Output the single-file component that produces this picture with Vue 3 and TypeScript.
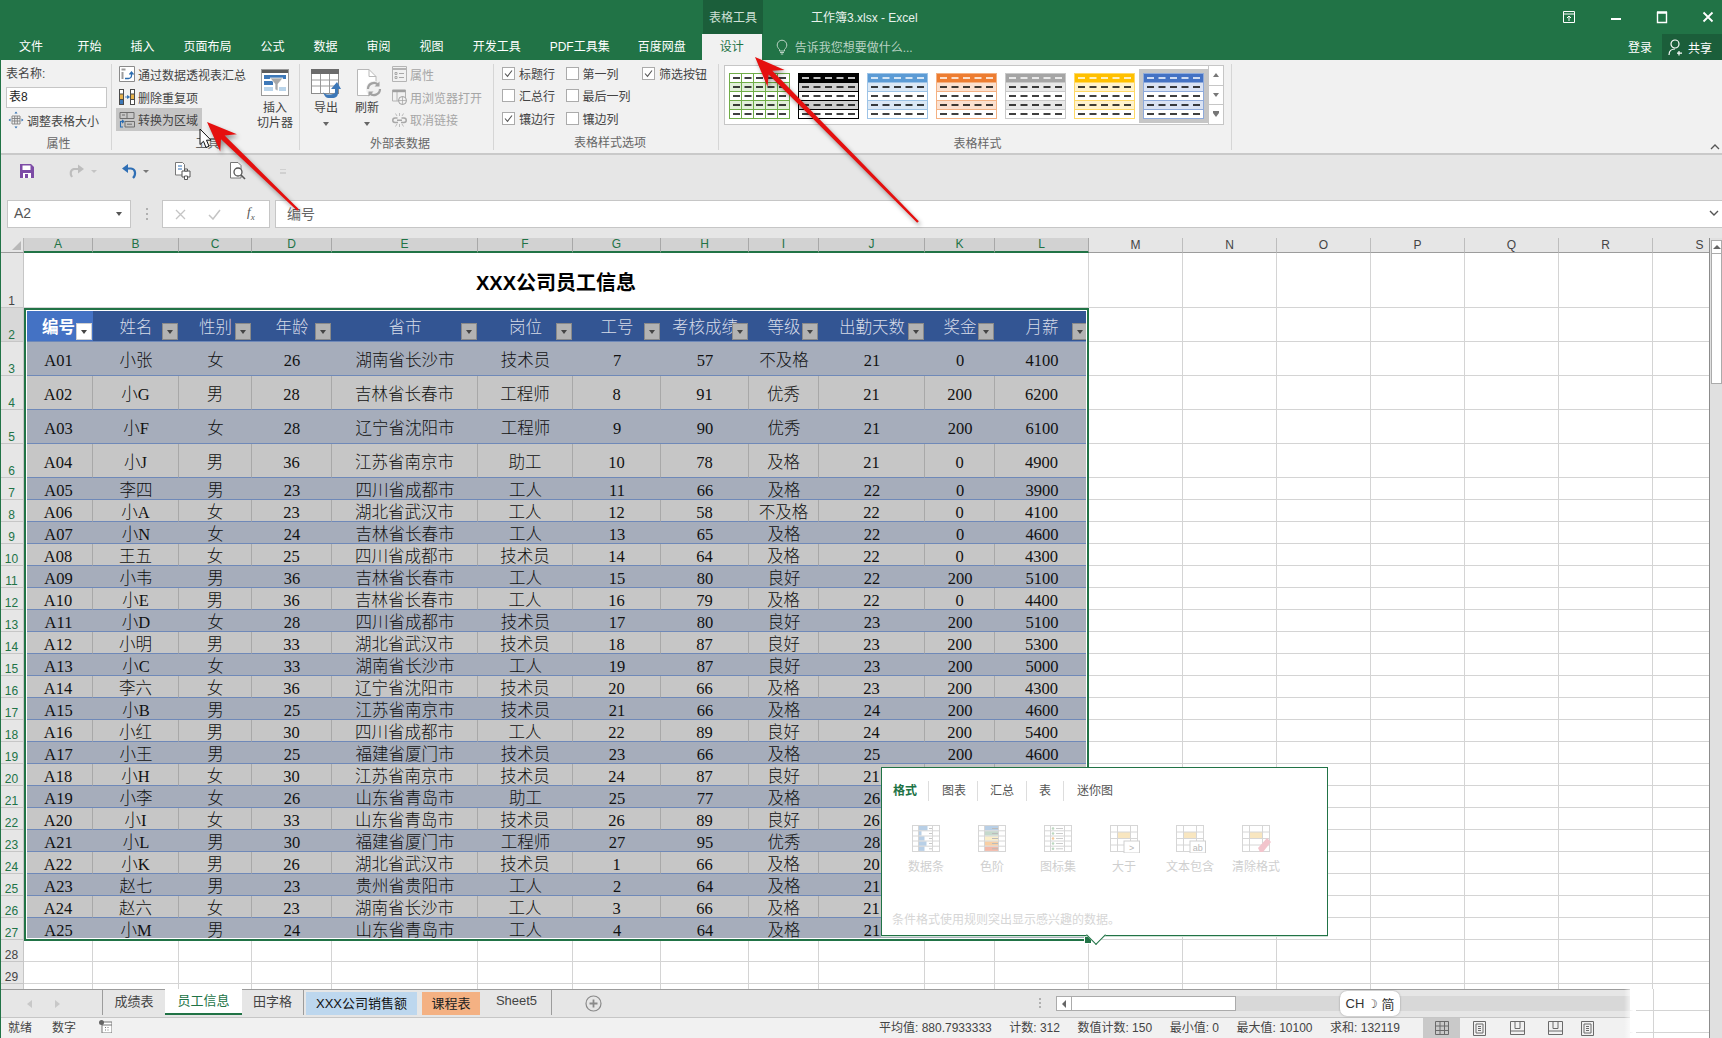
<script setup lang="ts">
const menu = ['文件', '开始', '插入', '页面布局', '公式', '数据', '审阅', '视图', '开发工具', 'PDF工具集', '百度网盘']
const colLetters = ['A', 'B', 'C', 'D', 'E', 'F', 'G', 'H', 'I', 'J', 'K', 'L']
const moreLetters = ['M', 'N', 'O', 'P', 'Q', 'R', 'S']
const heads = ['编号', '姓名', '性别', '年龄', '省市', '岗位', '工号', '考核成绩', '等级', '出勤天数', '奖金', '月薪']
const raw = [
  'A01 小张 女 26 湖南省长沙市 技术员 7 57 不及格 21 0 4100',
  'A02 小G 男 28 吉林省长春市 工程师 8 91 优秀 21 200 6200',
  'A03 小F 女 28 辽宁省沈阳市 工程师 9 90 优秀 21 200 6100',
  'A04 小J 男 36 江苏省南京市 助工 10 78 及格 21 0 4900',
  'A05 李四 男 23 四川省成都市 工人 11 66 及格 22 0 3900',
  'A06 小A 女 23 湖北省武汉市 工人 12 58 不及格 22 0 4100',
  'A07 小N 女 24 吉林省长春市 工人 13 65 及格 22 0 4600',
  'A08 王五 女 25 四川省成都市 技术员 14 64 及格 22 0 4300',
  'A09 小韦 男 36 吉林省长春市 工人 15 80 良好 22 200 5100',
  'A10 小E 男 36 吉林省长春市 工人 16 79 及格 22 0 4400',
  'A11 小D 女 28 四川省成都市 技术员 17 80 良好 23 200 5100',
  'A12 小明 男 33 湖北省武汉市 技术员 18 87 良好 23 200 5300',
  'A13 小C 女 33 湖南省长沙市 工人 19 87 良好 23 200 5000',
  'A14 李六 女 36 辽宁省沈阳市 技术员 20 66 及格 23 200 4300',
  'A15 小B 男 25 江苏省南京市 技术员 21 66 及格 24 200 4600',
  'A16 小红 男 30 四川省成都市 工人 22 89 良好 24 200 5400',
  'A17 小王 男 25 福建省厦门市 技术员 23 66 及格 25 200 4600',
  'A18 小H 女 30 江苏省南京市 技术员 24 87 良好 21',
  'A19 小李 女 26 山东省青岛市 助工 25 77 及格 26',
  'A20 小I 女 33 山东省青岛市 技术员 26 89 良好 26',
  'A21 小L 男 30 福建省厦门市 工程师 27 95 优秀 28',
  'A22 小K 男 26 湖北省武汉市 技术员 1 66 及格 20',
  'A23 赵七 男 23 贵州省贵阳市 工人 2 64 及格 21',
  'A24 赵六 女 23 湖南省长沙市 工人 3 66 及格 21',
  'A25 小M 男 24 山东省青岛市 工人 4 64 及格 21'
]
const dataRows = raw.map((line, i) => {
  const cells = line.split(' ')
  while (cells.length < 12) cells.push('')
  return { num: i + 3, cells, band: i % 2 === 0, tall: i < 4 }
})
const blankRows = ['28', '29', '']

const checks = [
  { t: '标题行', on: true }, { t: '第一列', on: false }, { t: '筛选按钮', on: true },
  { t: '汇总行', on: false }, { t: '最后一列', on: false }, { t: '', on: false, hide: true },
  { t: '镶边行', on: true }, { t: '镶边列', on: false }
]

const thumbs = [
  { head: '#ffffff', band: '#e2efda', line: '#70ad47', dash: '#000000', grid: true },
  { head: '#000000', band: '#cfcfcf', line: '#000000', dash: '#000000', hd: '#ffffff' },
  { head: '#5b9bd5', band: '#dbe8f5', line: '#9dc3e6', dash: '#000000', hd: '#ffffff' },
  { head: '#ed7d31', band: '#fbe0cf', line: '#f4b183', dash: '#000000', hd: '#ffffff' },
  { head: '#a5a5a5', band: '#e8e8e8', line: '#c9c9c9', dash: '#000000', hd: '#ffffff' },
  { head: '#ffc000', band: '#fff2cc', line: '#ffd966', dash: '#000000', hd: '#ffffff' },
  { head: '#4472c4', band: '#d9e2f3', line: '#8eaadb', dash: '#000000', hd: '#ffffff', active: true }
]

const popTabs = ['格式', '图表', '汇总', '表', '迷你图']
const popItems = [
  { k: 'bars', t: '数据条' }, { k: 'scale', t: '色阶' }, { k: 'icons', t: '图标集' },
  { k: 'gt', t: '大于' }, { k: 'ab', t: '文本包含' }, { k: 'clear', t: '清除格式' }
]
const scaleColors = ['#b8cfe6', '#c5d9cc', '#fbeec9', '#f8cfa4', '#f2b8a8']
const barWidths = [9, 3, 6, 8, 6]

const sheets = [
  { t: '成绩表', c: 'tab-a' }, { t: '员工信息', c: 'tab-on' }, { t: '田字格', c: 'tab-b' },
  { t: 'XXX公司销售额', c: 'tab-blue' }, { t: '课程表', c: 'tab-orange' }, { t: 'Sheet5', c: 'tab-c' }
]
const stats = ['平均值: 880.7933333', '计数: 312', '数值计数: 150', '最小值: 0', '最大值: 10100', '求和: 132119']

function arrow(x1: number, y1: number, x2: number, y2: number): string {
  const len = Math.hypot(x2 - x1, y2 - y1)
  const ux = (x2 - x1) / len
  const uy = (y2 - y1) / len
  const nx = -uy
  const ny = ux
  const at = (d: number, w: number) => `${x1 + ux * d + nx * w},${y1 + uy * d + ny * w}`
  return [
    at(0, -1.2), at(len - 22, -2.6), at(len - 30, -12), at(len, 0),
    at(len - 30, 12), at(len - 22, 2.6), at(0, 1.2)
  ].join(' ')
}
const arrows = [arrow(298, 210, 207, 122), arrow(918, 222, 755, 57)]
</script>

<template>
  <div class="app">
    <header class="titlebar">
      <div class="title-top">
        <div class="ctx-tab">表格工具</div>
        <div class="doc-title">工作簿3.xlsx - Excel</div>
        <div class="win-btns">
          <svg width="14" height="14" viewBox="0 0 14 14" class="win-opt"><path d="M1.5 1.5h11v11h-11zM1.5 4h11M7 11V6M5 8l2-2 2 2" fill="none" stroke="#fff" /></svg>
          <svg width="12" height="12" viewBox="0 0 12 12" class="win-min"><path d="M1 8h10" stroke="#fff" stroke-width="2" /></svg>
          <svg width="12" height="14" viewBox="0 0 12 14" class="win-max"><path d="M1.5 2.5h9v10h-9z" fill="none" stroke="#fff" stroke-width="1.4" /><path d="M1 2.5h10" stroke="#fff" stroke-width="2.4" /></svg>
          <svg width="12" height="12" viewBox="0 0 12 12" class="win-close"><path d="M1.5 1.5l9 9M10.5 1.5l-9 9" stroke="#fff" stroke-width="1.8" /></svg>
        </div>
      </div>
      <div class="title-menu">
        <span v-for="m in menu" :key="m" class="menu-item">{{ m }}</span>
        <span class="menu-design">设计</span>
        <svg class="bulb" width="12" height="16" viewBox="0 0 12 16"><path d="M3.5 10.5C2 9 1.2 7.800 1.200 6a4.800 4.800 0 0 1 9.600 0c0 1.800-.8 3-2.300 4.500v1.500h-5zM4 13.500h4M4.800 15h2.400" fill="none" stroke="#b9d2c3" /></svg>
        <span class="tell">告诉我您想要做什么...</span>
        <span class="login">登录</span>
        <span class="share">
          <svg width="16" height="17" viewBox="0 0 16 17"><circle cx="7" cy="5" r="4" fill="none" stroke="#fff" stroke-width="1.2" /><path d="M1 16c0-4 2-6 6-6M11 12v4.500M9 14.200h5" fill="none" stroke="#fff" stroke-width="1.2" /></svg>
          共享
        </span>
      </div>
    </header>

    <section class="ribbon">
      <div class="group g-prop">
        <div class="g-body col">
          <div class="name-label">表名称:</div>
          <div class="name-input">表8</div>
          <div class="item item-resize">
            <svg width="16" height="18" viewBox="0 0 16 18"><path d="M4 5h8v8H4zM4 7.500h8M4 10h8M6.700 5v8M9.300 5v8" fill="none" stroke="#7f7f7f" stroke-width=".9" /><path d="M8 .5L6.500 2.500h3zM8 17.500L6.500 15.500h3zM.5 9L2.500 7.500v3zM15.500 9l-2-1.500v3z" fill="#2b6cb0" /></svg>
            <span>调整表格大小</span>
          </div>
        </div>
        <div class="g-label">属性</div>
      </div>

      <div class="group g-tools">
        <div class="g-body row-x">
          <div class="col list">
            <div class="item">
              <svg width="16" height="16" viewBox="0 0 16 16"><path d="M.5.5h15v15H.5z" fill="#fff" stroke="#8a8a8a" /><path d="M2.500 2.500h4v2h-4zM2.500 6h2v7h-2z" fill="#9c9c9c" /><path d="M6 12.500h3.500a3 3 0 0 0 3-3V7M10.500 8.500l2-2.500 2 2.500" fill="none" stroke="#2b6cb0" stroke-width="1.300" /></svg>
              <span>通过数据透视表汇总</span>
            </div>
            <div class="item">
              <svg width="16" height="16" viewBox="0 0 16 16"><path d="M0 0h5v16H0zM11 0h5v16h-5z" fill="#4a4a4a" /><path d="M1 5.500h3V10H1z" fill="#e8b24a" /><path d="M1 11h3v4H1z" fill="#3d78b8" /><path d="M1 1h3v3.500H1zM12 1h3v3.500h-3zM12 11h3v4h-3z" fill="#fff" /><path d="M12 5.500h3V10h-3z" fill="#e8b24a" /><path d="M6 8h3.500M8.500 6.500L10.500 8l-2 1.500z" stroke="#2b6cb0" fill="#2b6cb0" stroke-width=".8" /></svg>
              <span>删除重复项</span>
            </div>
            <div class="item item-on">
              <svg width="16" height="16" viewBox="0 0 16 16"><path d="M1 .5h14v6H1zM8 .5v6" fill="none" stroke="#6e6e6e" /><path d="M3 3h3" stroke="#6e6e6e" /><path d="M6 9.500h9.500v5.500H6z" fill="none" stroke="#6e6e6e" /><path d="M8 12.200h5" stroke="#6e6e6e" /><path d="M4 15H1.500V9.500h3M3 8L4.800 9.500 3 11" fill="none" stroke="#2b6cb0" stroke-width="1.100" /></svg>
              <span>转换为区域</span>
            </div>
          </div>
          <div class="big slicer">
            <svg width="28" height="27" viewBox="0 0 28 27"><rect x=".5" y=".5" width="27" height="26" fill="#fff" stroke="#9a9a9a" /><rect x="1" y="1" width="26" height="3" fill="#5c5c5c" /><rect x="3" y="6" width="22" height="4" fill="#3d78b8" /><rect x="3" y="12" width="9" height="4" fill="#3d78b8" /><rect x="3" y="18" width="9" height="4" fill="#b9d4ea" /><rect x="18" y="18" width="7" height="4" fill="#b9d4ea" /><path d="M9 9h13l-5 6v7l-3-1.500V15z" fill="#a8a8a8" stroke="#fff" stroke-width=".7" /></svg>
            <span class="big-t">插入<br />切片器</span>
          </div>
        </div>
        <div class="g-label">工具</div>
      </div>

      <div class="group g-ext">
        <div class="g-body row-x">
          <div class="big bigbtn">
            <svg width="30" height="30" viewBox="0 0 30 30"><rect x=".5" y=".5" width="27" height="24" fill="#fff" stroke="#8c8c8c" /><rect x="0" y="0" width="28" height="5" fill="#6b6b6b" /><path d="M9.500 5v20M18.500 5v20M1 11h26M1 17h26" stroke="#9a9a9a" /><path d="M12 23c2 3 6 3 10 2 1 0 2-1 2-2v-3h-4l6-7 4 7h-3v4c0 3-2 5-6 5h-4c-2 0-4-3-5-6z" fill="#3d78b8" /></svg>
            <span class="big-t">导出</span>
            <i class="caret"></i>
          </div>
          <div class="big bigbtn">
            <svg width="30" height="30" viewBox="0 0 30 30"><path d="M5.500.5H17l7 7v19H5.500z" fill="#fff" stroke="#b8b8b8" /><path d="M17 .5v7h7" fill="none" stroke="#b8b8b8" /><circle cx="22" cy="20" r="8" fill="#f1f1f1" /><path d="M16 20a6 6 0 0 1 10.500-4M28 20a6 6 0 0 1-10.500 4" fill="none" stroke="#a2a2a2" stroke-width="2.200" /><path d="M27.500 12.500v5h-5zM16.500 27.500v-5h5z" fill="#a2a2a2" /></svg>
            <span class="big-t">刷新</span>
            <i class="caret"></i>
          </div>
          <div class="col list ext-list">
            <div class="item dis">
              <svg width="15" height="16" viewBox="0 0 15 16"><path d="M.5.500h14v15H.5z" fill="none" stroke="#b4b4b4" /><path d="M.5 3h14" stroke="#b4b4b4" stroke-width="2" /><path d="M3 6.500h2v2H3zM3 10.500h2v2H3zM7 7.500h5M7 11.500h5" stroke="#a8a8a8" fill="none" /></svg>
              <span>属性</span>
            </div>
            <div class="item dis">
              <svg width="15" height="16" viewBox="0 0 15 16"><path d="M.5 1h13v11H.5zM5 1v11" fill="none" stroke="#b4b4b4" /><path d="M.5 2h13" stroke="#a0a0a0" stroke-width="2.400" /><circle cx="10.500" cy="11.500" r="4" fill="#f1f1f1" stroke="#a0a0a0" /><path d="M6.500 11.500h8M10.500 7.500v8" stroke="#a0a0a0" stroke-width=".7" /></svg>
              <span>用浏览器打开</span>
            </div>
            <div class="item dis">
              <svg width="15" height="16" viewBox="0 0 15 16"><path d="M5.500 6H3a2 2 0 0 0 0 4.500h3M9.500 6H12a2 2 0 0 1 0 4.500H9M5 8.200h5" fill="none" stroke="#a8a8a8" stroke-width="1.500" /><path d="M7.500 1v3M3.500 1.500l1.500 2.500M11.500 1.500L10 4M7.500 12v3M3.500 14.500L5 12M11.500 14.500L10 12" stroke="#bcbcbc" /></svg>
              <span>取消链接</span>
            </div>
          </div>
        </div>
        <div class="g-label">外部表数据</div>
      </div>

      <div class="group g-opts">
        <div class="g-body opts-grid">
          <template v-for="(c, i) in checks" :key="i">
            <span v-if="c.hide"></span>
            <label v-else class="chk">
              <svg width="13" height="13" viewBox="0 0 13 13"><rect x=".5" y=".5" width="12" height="12" fill="#fff" stroke="#ababab" /><path v-if="c.on" d="M3 6.500l2.500 2.800L10 3.500" fill="none" stroke="#555" stroke-width="1.100" /></svg>
              <span>{{ c.t }}</span>
            </label>
          </template>
        </div>
        <div class="g-label">表格样式选项</div>
      </div>

      <div class="group g-styles">
        <div class="g-body">
          <div class="gallery">
            <div v-for="(t, i) in thumbs" :key="i" class="thumb" :class="{ 'thumb-on': t.active }">
              <svg width="61" height="46" viewBox="0 0 61 46">
                <rect x=".5" y=".5" width="60" height="45" fill="#fff" :stroke="t.line" />
                <rect x="1" y="1" width="59" height="8.500" :fill="t.head" />
                <rect x="1" y="9.500" width="59" height="9" :fill="t.band" />
                <rect x="1" y="27.500" width="59" height="9" :fill="t.band" />
                <path d="M.5 9.500h60M.5 18.500h60M.5 27.500h60M.5 36.500h60" :stroke="t.line" fill="none" />
                <path v-if="t.grid" d="M12.500 0v46M24.500 0v46M36.500 0v46M48.500 0v46" :stroke="t.line" fill="none" />
                <line x1="4" x2="58" y1="5" y2="5" :stroke="t.hd || t.dash" stroke-dasharray="7 4.500" stroke-width="1.300" />
                <line v-for="y in [14, 23, 32, 41]" :key="y" x1="4" x2="58" :y1="y" :y2="y" :stroke="t.dash" stroke-dasharray="7 4.500" stroke-width="1.300" />
              </svg>
            </div>
            <div class="gal-btns">
              <span><i class="tri-up"></i></span>
              <span><i class="tri-down"></i></span>
              <span><i class="tri-more"></i></span>
            </div>
          </div>
        </div>
        <div class="g-label">表格样式</div>
      </div>

      <div class="ribbon-end">
        <svg width="10" height="7" viewBox="0 0 10 7"><path d="M1 6l4-4 4 4" fill="none" stroke="#555" stroke-width="1.300" /></svg>
      </div>
    </section>

    <section class="qat">
      <svg class="q-save" width="14" height="14" viewBox="0 0 14 14"><path d="M0 0h11l3 3v11H0z" fill="#7d4ca6" /><rect x="2.500" y="1.500" width="8" height="4.500" fill="#fff" /><rect x="3" y="9" width="8" height="5" fill="#fff" /><rect x="5" y="10" width="3" height="4" fill="#7d4ca6" /></svg>
      <svg class="q-redo" width="16" height="14" viewBox="0 0 16 14"><path d="M3 13c-2-3-2-7 2-8h6" fill="none" stroke="#bdbdbd" stroke-width="2.200" /><path d="M9 .5L15 5l-6 4.500z" fill="#bdbdbd" /></svg>
      <i class="q-caret q-c1"></i>
      <svg class="q-undo" width="16" height="16" viewBox="0 0 16 16"><path d="M12 15c3-3 3-9-2-9.500H5" fill="none" stroke="#2f6fb5" stroke-width="2.200" /><path d="M7 1L1 5.500 7 10z" fill="#2f6fb5" /></svg>
      <i class="q-caret q-c2"></i>
      <svg class="q-print" width="17" height="18" viewBox="0 0 17 18"><path d="M.5.500h7l2 2V13H.5z" fill="#fff" stroke="#777" /><path d="M3 4h4M3 7h4" stroke="#2f6fb5" /><path d="M7 9h8v6H7z" fill="#fff" stroke="#555" /><path d="M9.500 7h3v2h-3zM9.500 14h3v3.500h-3z" fill="#fff" stroke="#555" /></svg>
      <svg class="q-find" width="16" height="18" viewBox="0 0 16 18"><path d="M.5.500h7.500l3 3V16H.5z" fill="#fff" stroke="#777" /><circle cx="8" cy="10" r="4" fill="#fff" stroke="#555" stroke-width="1.300" /><path d="M11 13l4 4" stroke="#555" stroke-width="1.600" /></svg>
      <i class="q-more"></i>
    </section>

    <section class="formula">
      <div class="namebox"><span>A2</span><i class="caret dark"></i></div>
      <div class="dots"></div>
      <div class="fx-box">
        <svg width="11" height="11" viewBox="0 0 11 11"><path d="M1 1l9 9M10 1l-9 9" stroke="#c4c4c4" stroke-width="1.300" /></svg>
        <svg width="13" height="11" viewBox="0 0 13 11"><path d="M1 6l4 4 7-9" fill="none" stroke="#c4c4c4" stroke-width="1.500" /></svg>
        <span class="fx">f<sub>x</sub></span>
      </div>
      <div class="formula-input">
        <span>编号</span>
        <svg width="10" height="7" viewBox="0 0 10 7"><path d="M1 1l4 4 4-4" fill="none" stroke="#555" stroke-width="1.400" /></svg>
      </div>
    </section>

    <section class="work">
      <div class="sheet">
        <div class="grid">
          <div class="row col-head">
            <div class="corner"><i></i></div>
            <div v-for="c in colLetters" :key="c" class="ch ch-sel">{{ c }}</div>
            <div v-for="c in moreLetters" :key="c" class="ch">{{ c }}</div>
          </div>

          <div class="row r-title">
            <div class="rh rh-plain">1</div>
            <div class="title-cell">XXX公司员工信息</div>
            <div v-for="c in moreLetters" :key="c" class="blank"></div>
          </div>

          <div class="row r-head">
            <div class="rh rh-head">2</div>
            <div v-for="(h, i) in heads" :key="h" class="hc" :class="{ 'hc-on': i === 0 }">
              <span class="hc-t">{{ h }}</span>
              <span class="filter" :class="{ 'filter-on': i === 0 }"><i></i></span>
            </div>
            <div v-for="c in moreLetters" :key="c" class="blank"></div>
          </div>

          <div v-for="r in dataRows" :key="r.num" class="row" :class="r.tall ? 'r-tall' : 'r-norm'">
            <div class="rh">{{ r.num }}</div>
            <div v-for="(v, i) in r.cells" :key="i" class="dc" :class="r.band ? 'dc-band' : 'dc-plain'"><span v-if="v">{{ v }}</span></div>
            <div v-for="c in moreLetters" :key="c" class="blank"></div>
          </div>

          <div v-for="(n, idx) in blankRows" :key="idx" class="row r-norm">
            <div class="rh rh-plain">{{ n }}</div>
            <div v-for="c in colLetters" :key="c" class="blank"></div>
            <div v-for="c in moreLetters" :key="c" class="blank"></div>
          </div>

          <div class="selection"><i class="handle"></i></div>
        </div>

        <div class="bottom">
          <div class="bars">
            <div class="tabbar">
              <div class="tab-nav">
                <i class="nav-l"></i><i class="nav-r"></i>
              </div>
              <div class="tabs">
                <div v-for="s in sheets" :key="s.t" class="tab" :class="s.c">{{ s.t }}</div>
              </div>
              <div class="tab-add">
                <svg width="17" height="17" viewBox="0 0 17 17"><circle cx="8.500" cy="8.500" r="7.500" fill="none" stroke="#8a8a8a" stroke-width="1.200" /><path d="M4.500 8.500h8M8.500 4.500v8" stroke="#8a8a8a" stroke-width="1.800" /></svg>
              </div>
              <div class="hs-dots"></div>
              <div class="hscroll">
                <span class="hs-btn"><i></i></span>
                <span class="hs-thumb"></span>
              </div>
            </div>
            <div class="statusbar">
              <div class="st-left">
                <span>就绪</span>
                <span>数字</span>
                <svg width="13" height="13" viewBox="0 0 13 13"><rect x="3" y="2" width="10" height="11" fill="#fff" stroke="#777" /><path d="M3 5h10M6 7.500h1M8.500 7.500h1M6 10h1M8.500 10h1" stroke="#777" /><circle cx="2.500" cy="2.500" r="2.500" fill="#666" /></svg>
              </div>
              <div class="st-stats"><span v-for="s in stats" :key="s">{{ s }}</span></div>
              <div class="views">
                <span class="v v-on"><svg width="14" height="14" viewBox="0 0 14 14"><path d="M.5.500h13v13H.5zM.5 5h13M.5 9.500h13M5 .5v13M9.500 .5v13" fill="none" stroke="#6a6a6a" /></svg></span>
                <span class="v"><svg width="13" height="15" viewBox="0 0 13 15"><path d="M.5.500h12v14H.5zM3 3h7v9H3zM5 5.500h3M5 7.500h3M5 9.500h3" fill="none" stroke="#6a6a6a" /></svg></span>
                <span class="v"><svg width="15" height="14" viewBox="0 0 15 14"><path d="M.5.500h14v13H.5zM5 .5v7h5V.5M.5 10h14" fill="none" stroke="#6a6a6a" /></svg></span>
                <span class="v v-s"><svg width="15" height="14" viewBox="0 0 15 14"><path d="M.5.500h14v13H.5zM5 .5v7h5V.5M.5 10h14" fill="none" stroke="#6a6a6a" /></svg></span>
                <span class="v v-s2"><svg width="13" height="15" viewBox="0 0 13 15"><path d="M.5.500h12v14H.5zM3 3h7v9H3zM5 5.500h3M5 7.500h3M5 9.500h3" fill="none" stroke="#6a6a6a" /></svg></span>
              </div>
            </div>
          </div>
          <div class="grid-rest"></div>
        </div>
      </div>
      <div class="vscroll">
        <span class="vs-btn"><i></i></span>
        <span class="vs-thumb"></span>
      </div>
    </section>

    <!-- quick analysis popup, sits over the sheet -->
    <div class="popup">
      <div class="pop-tabs">
        <span v-for="(t, i) in popTabs" :key="t" class="pop-tab" :class="'pt' + i">{{ t }}</span>
      </div>
      <div class="pop-items">
        <div v-for="it in popItems" :key="it.k" class="pop-item">
          <svg width="30" height="28" viewBox="0 0 30 28">
            <rect x=".5" y=".5" width="27" height="26" fill="#fff" stroke="#d6d6d6" />
            <template v-if="it.k === 'bars'">
              <rect v-for="(w, i) in barWidths" :key="i" x="6.500" :y="1 + i * 5.100" :width="w" height="4.500" fill="#b8cfe6" />
              <path d="M6.500 0v27M20.500 0v27M1 5.800h27M1 11h27M1 16h27M1 21.200h27" stroke="#d6d6d6" />
              <path d="M17 3.500h3M17 8.500h3M17 13.500h3M17 18.500h3M17 23.800h3" stroke="#c8c8c8" />
            </template>
            <template v-else-if="it.k === 'scale'">
              <rect v-for="(c, i) in scaleColors" :key="i" x="6.500" :y="1 + i * 5.100" width="14" height="4.500" :fill="c" />
              <path d="M6.500 0v27M20.500 0v27M1 5.800h27M1 11h27M1 16h27M1 21.200h27" stroke="#d6d6d6" />
              <path d="M14 3.500h6M14 8.500h6M14 13.500h6M14 18.500h6M14 23.800h6" stroke="#bbb" />
            </template>
            <template v-else-if="it.k === 'icons'">
              <path d="M6.500 0v27M20.500 0v27M1 5.800h27M1 11h27M1 16h27M1 21.200h27" stroke="#d6d6d6" />
              <circle cx="9" cy="3.500" r="1.300" fill="#bcd8c0" /><circle cx="9" cy="8.500" r="1.300" fill="#bcd8c0" /><circle cx="9" cy="13.500" r="1.300" fill="#f5c89a" /><circle cx="9" cy="18.500" r="1.300" fill="#bcd8c0" /><circle cx="9" cy="23.800" r="1.300" fill="#bcd8c0" />
              <path d="M12 3.500h7M12 8.500h7M12 13.500h7M12 18.500h7M12 23.800h7" stroke="#ccc" />
            </template>
            <template v-else>
              <rect x="8" y="7" width="13" height="6.500" fill="#f8e6c0" />
              <path d="M7.500 0v27M20.500 0v27M1 7h27M1 13.500h27M1 20h27" stroke="#d6d6d6" />
              <g v-if="it.k === 'gt' || it.k === 'ab'">
                <rect x="14" y="16" width="15.500" height="12" fill="#fff" stroke="#cfcfcf" />
                <text x="21.700" y="25.500" text-anchor="middle" class="pop-svg-t">{{ it.k === 'gt' ? '>' : 'ab' }}</text>
              </g>
              <path v-else d="M16 23l9-10 4 4-8 10h-3z" fill="#f2c4cc" />
            </template>
          </svg>
          <span>{{ it.t }}</span>
        </div>
      </div>
      <div class="pop-hint">条件格式使用规则突出显示感兴趣的数据。</div>
      <i class="pop-arrow"></i>
    </div>

    <div class="ime">CH <span class="moon">☽</span> 简</div>

    <svg class="annot" width="1722" height="1038" viewBox="0 0 1722 1038">
      <polygon v-for="(p, i) in arrows" :key="i" :points="p" fill="#e5100f" />
    </svg>
    <svg class="cursor" width="15" height="21" viewBox="0 0 15 21"><path d="M1 1v15.500l3.500-3.200L7 19.500l3-1.300-2.500-6H12z" fill="#fff" stroke="#111" stroke-width="1" /></svg>
  </div>
</template>

<style>
html, body { margin: 0; padding: 0; background: #fff; overflow: hidden; }
</style>

<style scoped>
* { box-sizing: border-box; }
.app {
  position: relative;
  width: 1722px;
  height: 1038px;
  overflow: hidden;
  display: flex;
  flex-direction: column;
  font-family: "Liberation Sans", "Noto Sans CJK SC", sans-serif;
  font-size: 12px;
  color: #444;
  background: #fff;
}
.app::after { content: ""; position: absolute; left: 0; top: 0; bottom: 0; width: 1px; background: #217346; }

/* title bar */
.titlebar { height: 60px; background: #217346; color: #fff; flex: none; }
.title-top { height: 34px; display: flex; align-items: stretch; }
.ctx-tab { margin-left: 703px; width: 60px; background: #1b5e3a; color: #cfe0d6; display: flex; align-items: center; justify-content: center; padding-bottom: 1px; }
.doc-title { margin-left: 48px; display: flex; align-items: center; color: #e8f1ec; padding-bottom: 2px; }
.win-btns { margin-left: auto; display: flex; align-items: center; padding-right: 8px; }
.win-opt { margin-right: 34px; }
.win-min { margin-right: 34px; }
.win-max { margin-right: 34px; }
.title-menu { height: 26px; display: flex; align-items: center; padding-left: 19px; }
.menu-item { margin-right: 29px; white-space: nowrap; padding-bottom: 3px; }
.menu-item:first-child { margin-right: 34.500px; }
.menu-item:nth-child(10) { margin-right: 28px; }
.menu-design { margin-left: -13px; width: 60px; height: 26px; background: #f1f1f1; color: #217346; display: flex; align-items: center; justify-content: center; padding-bottom: 3px; }
.bulb { margin-left: 14px; }
.tell { margin-left: 7px; color: #b9d2c3; padding-bottom: 2px; }
.login { margin-left: auto; margin-right: 10px; padding-bottom: 2px; }
.share { width: 60px; height: 26px; background: #1b5e3a; display: flex; align-items: center; gap: 4px; padding-left: 6px; }

/* ribbon */
.ribbon { height: 95px; flex: none; background: #f1f1f1; border-bottom: 2px solid #c9c9c9; display: flex; padding-top: 3px; }
.group { position: relative; display: flex; flex-direction: column; border-right: 1px solid #d6d6d6; height: 86px; flex: none; margin-top: 1px; }
.g-body { height: 68px; margin-top: -1px; }
.g-label { text-align: center; line-height: 26px; height: 19px; color: #666; }
.col { display: flex; flex-direction: column; }
.row-x { display: flex; }
.list { align-items: flex-start; }
.g-prop { width: 112px; padding-left: 6px; }
.g-tools { width: 188px; padding-left: 4px; }
.g-ext { width: 194px; padding-left: 7px; }
.g-opts { width: 225px; padding-left: 8px; }
.g-styles { width: 513px; padding-left: 5px; }
.ribbon-end { flex: 1; display: flex; justify-content: flex-end; align-items: flex-end; padding: 0 2px 3px 0; }
.name-label { height: 20px; line-height: 23px; }
.name-input { width: 101px; height: 21px; margin-top: 4px; border: 1px solid #c6c6c6; background: #fff; line-height: 19px; padding-left: 2px; color: #222; }
.item { height: 23px; display: flex; align-items: center; gap: 3px; padding-left: 3px; padding-right: 4px; white-space: nowrap; }
.item-resize { height: 23px; margin-left: 0; padding-left: 2px; margin-top: 1px; gap: 3px; }
.item-on { background: #c6c6c6; }
.dis { color: #a6a6a6; }
.slicer { margin-left: 7px; width: 36px; }
.big { display: flex; flex-direction: column; align-items: center; padding-top: 6px; }
.bigbtn { width: 38px; }
.bigbtn + .bigbtn { margin-left: 3px; }
.big-t { line-height: 14.500px; text-align: center; margin-top: 5px; white-space: nowrap; }
.bigbtn .big-t { margin-top: 2px; }
.caret { display: block; width: 0; height: 0; border-left: 3.500px solid transparent; border-right: 3.500px solid transparent; border-top: 4px solid #666; margin-top: 6px; }
.ext-list { margin-left: 3px; }
.opts-grid { display: grid; grid-template-columns: 63.600px 76.400px auto; grid-auto-rows: 22.600px; margin-top: -2px; }
.chk { display: flex; align-items: center; gap: 4px; white-space: nowrap; }
.gallery { display: flex; width: 500px; height: 60px; margin-top: 2px; background: #fff; border: 1px solid #c6c6c6; align-items: center; padding-left: 0; }
.thumb { width: 69px; height: 54px; display: flex; align-items: center; justify-content: center; flex: none; margin-top: 1px; }
.thumb-on { background: #c6c6c6; }
.gal-btns { width: 16px; height: 100%; margin-left: auto; display: flex; flex-direction: column; border-left: 1px solid #c6c6c6; }
.gal-btns span { flex: 1; display: flex; align-items: center; justify-content: center; border-bottom: 1px solid #c6c6c6; }
.gal-btns span:last-child { border-bottom: 0; }
.tri-up { border-left: 3px solid transparent; border-right: 3px solid transparent; border-bottom: 4px solid #777; }
.tri-down { border-left: 3px solid transparent; border-right: 3px solid transparent; border-top: 4px solid #777; }
.tri-more { border-left: 3px solid transparent; border-right: 3px solid transparent; border-top: 4px solid #777; box-shadow: 0 -2px 0 0 #777; }

/* quick access */
.qat { height: 45px; flex: none; background: #e6e6e6; display: flex; align-items: center; padding-bottom: 13px; }
.qat svg, .qat i { flex: none; }
.q-save { margin-left: 20px; }
.q-redo { margin-left: 35px; }
.q-caret { display: block; width: 0; height: 0; border-left: 3px solid transparent; border-right: 3px solid transparent; border-top: 3.500px solid #777; }
.q-c1 { margin-left: 6px; border-top-color: #c4c4c4; }
.q-undo { margin-left: 24px; }
.q-c2 { margin-left: 6px; }
.q-print { margin-left: 26px; }
.q-find { margin-left: 38px; }
.q-more { display: block; margin-left: 34px; width: 6px; height: 5px; border-top: 1px solid #d0d0d0; border-bottom: 2px solid #d0d0d0; }

/* formula bar */
.formula { height: 38px; flex: none; background: #e6e6e6; padding-bottom: 10px; display: flex; padding-left: 7px; }
.namebox { width: 124px; background: #fff; border: 1px solid #c6c6c6; display: flex; align-items: center; justify-content: space-between; padding: 0 8px 2px 6px; font-size: 14px; color: #555; }
.namebox .dark { margin-top: 2px; border-top-color: #555; }
.dots { width: 31px; position: relative; }
.dots::before { content: ""; position: absolute; left: 15px; top: 8px; width: 2px; height: 12px; background: repeating-linear-gradient(to bottom, #b0b0b0 0 2px, transparent 2px 5px); }
.fx-box { width: 108px; background: #fff; border: 1px solid #c6c6c6; display: flex; align-items: center; gap: 0; padding-left: 12px; }
.fx-box svg:nth-child(2) { margin-left: 22px; }
.fx { margin-left: 26px; margin-top: -3px; font-family: "Liberation Serif", serif; font-style: italic; font-weight: normal; font-size: 13px; color: #555; }
.fx sub { font-size: 9px; }
.formula-input { margin-left: 5px; flex: 1; background: #fff; border: 1px solid #c6c6c6; border-right: 0; display: flex; align-items: center; justify-content: space-between; padding: 0 3px 2px 11px; font-size: 14px; color: #666; }

/* sheet */
.work { flex: 1; display: flex; min-height: 0; }
.sheet { width: 1710px; flex: none; display: flex; flex-direction: column; overflow: hidden; border-right: 1px solid #8c8c8c; }
.grid { position: relative; height: 751px; flex: none; overflow: hidden; }
.row { display: grid; grid-template-columns: 24px 69px 86px 73px 80px 146px 95px 88px 88px 70px 106px 70px 94px 94px 94px 94px 94px 94px 94px 94px; grid-auto-rows: 100%; width: 1747px; }
.col-head { height: 15px; background: #e6e6e6; }
.corner { position: relative; background: #e6e6e6; border-bottom: 1px solid #9c9c9c; border-right: 1px solid #b5b5b5; }
.corner i { position: absolute; right: 2px; bottom: 2px; border-left: 9px solid transparent; border-bottom: 9px solid #b8b8b8; }
.ch { display: flex; align-items: flex-end; justify-content: center; border-right: 1px solid #bdbdbd; border-bottom: 1px solid #9c9c9c; color: #444; font-size: 12px; line-height: 13px; }
.ch-sel { background: #d2d2d2; color: #217346; border-bottom: 2px solid #217346; border-right-color: #a8a8a8; }
.r-title { height: 55px; }
.r-head { height: 34px; }
.r-tall { height: 34px; }
.r-norm { height: 22px; }
.rh { background: #e6e6e6; border-right: 1px solid #c6c6c6; border-bottom: 1px solid #c6c6c6; color: #217346; font-size: 12px; text-align: center; display: flex; align-items: flex-end; justify-content: center; line-height: 12px; }
.rh-plain { color: #444; }
.rh-head { background: #d8d8d8; }
.title-cell { grid-column: span 12; border-right: 1px solid #d4d4d4; border-bottom: 1px solid #d4d4d4; display: flex; align-items: center; justify-content: center; padding-top: 2px; font-size: 20px; font-weight: 700; color: #000; background: #fff; }
.blank { border-right: 1px solid #d4d4d4; border-bottom: 1px solid #d4d4d4; background: #fff; }
.hc { position: relative; background: #335593; border-bottom: 1px solid #6f89b8; display: flex; align-items: center; justify-content: center; padding-top: 3px; font-size: 16.500px; color: #d6dbe8; font-weight: 300; white-space: nowrap; overflow: hidden; }
.hc-on { background: #4472c4; color: #fff; font-weight: 700; }
.filter { position: absolute; right: 1px; bottom: 1px; width: 16px; height: 17px; background: #b3b3b3; border: 1px solid #8a8a8a; display: flex; align-items: center; justify-content: center; }
.filter i { border-left: 3.500px solid transparent; border-right: 3.500px solid transparent; border-top: 4px solid #444; }
.filter-on { background: #fff; border-color: #d0d0d0; }
.dc { display: flex; align-items: center; justify-content: center; padding-top: 5px; font-family: "Liberation Serif", "Noto Sans CJK SC", serif; font-size: 16.500px; font-weight: 300; color: #111; border-bottom: 1px solid #6f89b8; white-space: nowrap; line-height: 16px; overflow: hidden; }
.dc-band { background: #a6adbb; }
.dc-plain { background: #c6c6c6; border-right: 1px solid #a8a8a8; }
.selection { position: absolute; left: 24px; top: 70px; width: 1065px; height: 633px; border: 2px solid #217346; box-shadow: inset 0 0 0 1px #fff; pointer-events: none; }
.handle { position: absolute; right: -4px; bottom: -4px; width: 6px; height: 6px; background: #217346; outline: 1px solid #fff; }

/* bottom */
.bottom { flex: 1; display: flex; min-height: 0; }
.bars { width: 1630px; flex: none; display: flex; flex-direction: column; position: relative; }
.bars::after { content: ""; position: absolute; top: 0; right: -6px; bottom: 0; width: 12px; background: linear-gradient(to right, rgba(255, 255, 255, 0), #fff 80%); }
.grid-rest { flex: 1; background: linear-gradient(#d4d4d4, #d4d4d4) 23px 0 / 1px 100% no-repeat, repeating-linear-gradient(to bottom, #fff 0 21px, #d4d4d4 21px 22px); }
.tabbar { height: 28px; flex: none; background: #e6e6e6; border-top: 1px solid #9c9c9c; display: flex; }
.tab-nav { width: 102px; display: flex; align-items: center; padding-left: 27px; gap: 23px; }
.nav-l { border-top: 4px solid transparent; border-bottom: 4px solid transparent; border-right: 5px solid #c8c8c8; }
.nav-r { border-top: 4px solid transparent; border-bottom: 4px solid transparent; border-left: 5px solid #c8c8c8; }
.tabs { display: flex; height: 25px; border-left: 1px solid #9c9c9c; }
.tab { display: flex; align-items: center; justify-content: center; font-size: 13px; color: #444; white-space: nowrap; padding-bottom: 4px; }
.tab-a { width: 62px; }
.tab-on { width: 77px; background: #fff; color: #217346; border-bottom: 2px solid #217346; margin-top: -1px; height: 26px; }
.tab-b { width: 62px; border-right: 1px solid #9c9c9c; }
.tab-blue { width: 111px; margin-left: 2px; background: #bdd7ee; color: #111; margin-top: 2px; height: 23px; padding-bottom: 2px; }
.tab-orange { width: 58px; margin-left: 5px; background: #f4b183; color: #222; margin-top: 2px; height: 23px; padding-bottom: 2px; }
.tab-c { width: 70px; margin-left: 2px; border-right: 1px solid #9c9c9c; }
.tab-add { margin-left: 33px; display: flex; align-items: center; height: 27px; }
.hs-dots { margin-left: 437px; width: 2px; height: 12px; align-self: center; background: repeating-linear-gradient(to bottom, #b0b0b0 0 2px, transparent 2px 4px); }
.hscroll { margin-left: 15px; flex: 1; margin-top: 6px; height: 15px; background: #d8d8d8; display: flex; }
.hs-btn { width: 16px; background: #fff; border: 1px solid #ababab; display: flex; align-items: center; justify-content: center; }
.hs-btn i { border-top: 4px solid transparent; border-bottom: 4px solid transparent; border-right: 4px solid #666; }
.hs-thumb { width: 164px; background: #fff; border: 1px solid #ababab; border-left: 0; }
.statusbar { flex: 1; background: #f1f1f1; border-top: 1px solid #c6c6c6; display: flex; align-items: center; }
.st-left { width: 879px; display: flex; align-items: center; padding: 0 0 3px 8px; }
.st-left span:nth-child(2) { margin-left: 20px; }
.st-left svg { margin-left: 23px; }
.st-stats { display: flex; gap: 17.500px; width: 544px; white-space: nowrap; padding-bottom: 3px; }
.views { display: flex; align-items: center; height: 100%; }
.v { height: 100%; display: flex; align-items: center; justify-content: center; width: 38px; }
.v-on { width: 37px; background: #c9c9c9; }
.v-s { width: 39px; }
.v-s2 { width: 24px; }

.vscroll { flex: 1; background: #e0e0e0; display: flex; flex-direction: column; padding: 2px 0 0 1px; }
.vs-btn { height: 14px; background: #fff; border: 1px solid #ababab; display: flex; align-items: center; justify-content: center; flex: none; }
.vs-btn i { border-left: 4px solid transparent; border-right: 4px solid transparent; border-bottom: 4px solid #666; }
.vs-thumb { height: 130px; background: #fff; border: 1px solid #ababab; border-top: 0; flex: none; }

/* popup */
.popup { position: absolute; left: 881px; top: 767px; width: 447px; height: 169px; background: #fff; border: 1px solid #217346; box-shadow: 0 1px 0 #cfe2d6; }
.pop-tabs { position: absolute; left: 0; right: 0; top: 13px; height: 20px; display: flex; align-items: center; }
.pop-tab { position: absolute; top: 0; height: 20px; line-height: 20px; color: #555; text-align: center; }
.pt0 { left: 11px; font-weight: 700; color: #217346; }
.pt1 { left: 60px; }
.pt2 { left: 108px; }
.pt3 { left: 157px; }
.pt4 { left: 195px; }
.pop-tabs::before { content: ""; position: absolute; top: 0; left: 46px; width: 137px; height: 20px; background:
  linear-gradient(#ddd, #ddd) 0 0 / 1px 100% no-repeat,
  linear-gradient(#ddd, #ddd) 49px 0 / 1px 100% no-repeat,
  linear-gradient(#ddd, #ddd) 98px 0 / 1px 100% no-repeat,
  linear-gradient(#ddd, #ddd) 135px 0 / 1px 100% no-repeat; }
.pop-items { position: absolute; left: 11px; top: 57px; display: flex; }
.pop-item { width: 66px; display: flex; flex-direction: column; align-items: center; color: #cfcfcf; white-space: nowrap; line-height: 16px; }
.pop-item svg { margin-bottom: 6px; margin-left: 2px; }
.pop-svg-t { font-family: "Liberation Sans", sans-serif; font-size: 9px; fill: #b8b8b8; }
.pop-hint { position: absolute; left: 10px; top: 144px; color: #d6d6d6; line-height: 16px; }
.pop-arrow { position: absolute; left: 207px; bottom: -7px; width: 14px; height: 14px; background: #fff; border-right: 1px solid #217346; border-bottom: 1px solid #217346; transform: rotate(45deg); }

.ime { position: absolute; left: 1340px; top: 991px; width: 60px; height: 25px; background: #fff; border-radius: 7px; box-shadow: 0 0 2px rgba(0, 0, 0, .35); display: flex; align-items: center; justify-content: center; gap: 3px; color: #333; font-size: 13px; }
.moon { font-size: 12px; }

.annot { position: absolute; left: 0; top: 0; pointer-events: none; filter: drop-shadow(2px 3px 2px rgba(0, 0, 0, .4)); }
.cursor { position: absolute; left: 199px; top: 128px; pointer-events: none; }
</style>
